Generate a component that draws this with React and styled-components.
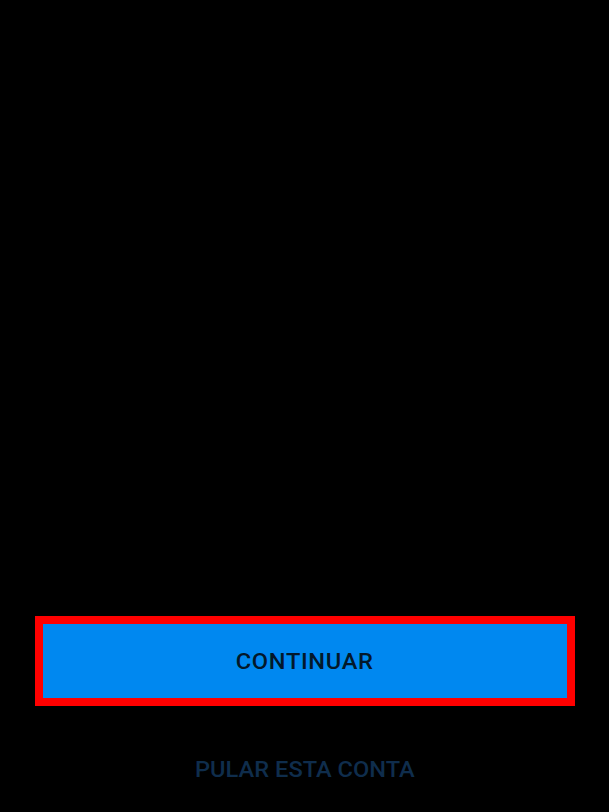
import React from 'react'
import styled, { createGlobalStyle } from 'styled-components'

const GlobalStyle = createGlobalStyle`
    html, body {
        margin: 0;
        padding: 0;
        background: #000;
        font-family: Roboto, "Liberation Sans", Arial, sans-serif;
    }
`

const Screen = styled.div`
    min-height: 100vh;
    box-sizing: border-box;
    display: flex;
    flex-direction: column;
    justify-content: flex-end;
    align-items: center;
    padding: 0 34px 30px 35px;
    background: #000;
`

const Highlight = styled.div`
    width: 100%;
    box-sizing: border-box;
    border: 8px solid #ff0000;
`

const ContinueButton = styled.button`
    display: flex;
    align-items: center;
    justify-content: center;
    width: 100%;
    height: 74px;
    margin: 0;
    padding: 0;
    border: none;
    background: #0088f0;
    color: #03182a;
    font-family: Roboto, "Liberation Sans", Arial, sans-serif;
    cursor: pointer;
`

const SkipLink = styled.button`
    margin-top: 52px;
    height: 24px;
    line-height: 24px;
    padding: 0;
    border: none;
    background: none;
    color: #0f2d4c;
    font-family: Roboto, "Liberation Sans", Arial, sans-serif;
    cursor: pointer;
`

// the capture is a little stretched sideways, so the label is widened to match
const Label = styled.span`
    display: inline-block;
    font-size: 21.5px;
    font-weight: 500;
    letter-spacing: ${(p) => p.spacing || 0}px;
    transform: scaleX(1.1);
`

const App = () => {
    return (
        <>
            <GlobalStyle />
            <Screen>
                <Highlight>
                    <ContinueButton>
                        <Label spacing={0.6}>CONTINUAR</Label>
                    </ContinueButton>
                </Highlight>
                <SkipLink>
                    <Label>PULAR ESTA CONTA</Label>
                </SkipLink>
            </Screen>
        </>
    )
}

export default App
